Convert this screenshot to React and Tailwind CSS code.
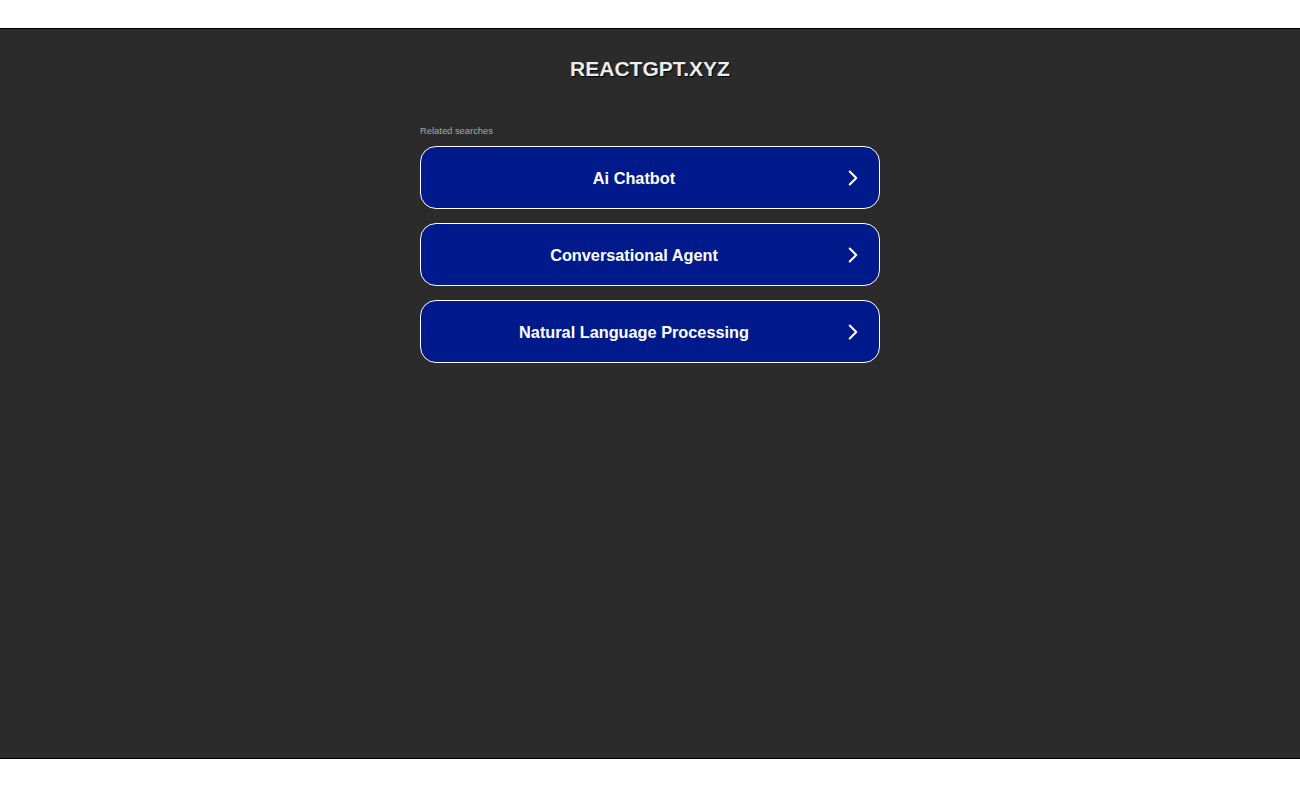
import { ChevronRight } from 'lucide-react';

const searches = ['Ai Chatbot', 'Conversational Agent', 'Natural Language Processing'];

const App = () => {
  return (
    <div className="w-[1300px] h-[788px] bg-white font-['Liberation_Sans',Arial,sans-serif]">
      <div className="h-[28px]" />
      <div className="h-[731px] bg-[#2b2b2b] border-t border-b border-black flex flex-col items-center">
        <h1 className="mt-[27px] text-[21px] leading-[25px] font-bold text-[#ececec] [text-shadow:1px_1px_1px_#000]">
          REACTGPT.XYZ
        </h1>
        <div className="w-[460px] mt-[44px]">
          <p className="text-[9.4px] leading-[12px] text-[#a9a9a9] mb-[9px]">Related searches</p>
          <div className="flex flex-col gap-[14px]">
            {searches.map((s) => (
              <div
                key={s}
                className="h-[63px] rounded-[16px] border border-white bg-[#011a8b] flex items-center"
              >
                <span className="flex-1 text-center pl-[7px] pt-[2px] text-[16.3px] font-bold text-white">{s}</span>
                <ChevronRight className="w-[26px] h-[26px] text-white mr-[13px]" strokeWidth={1.9} />
              </div>
            ))}
          </div>
        </div>
      </div>
    </div>
  );
};

export default App;
